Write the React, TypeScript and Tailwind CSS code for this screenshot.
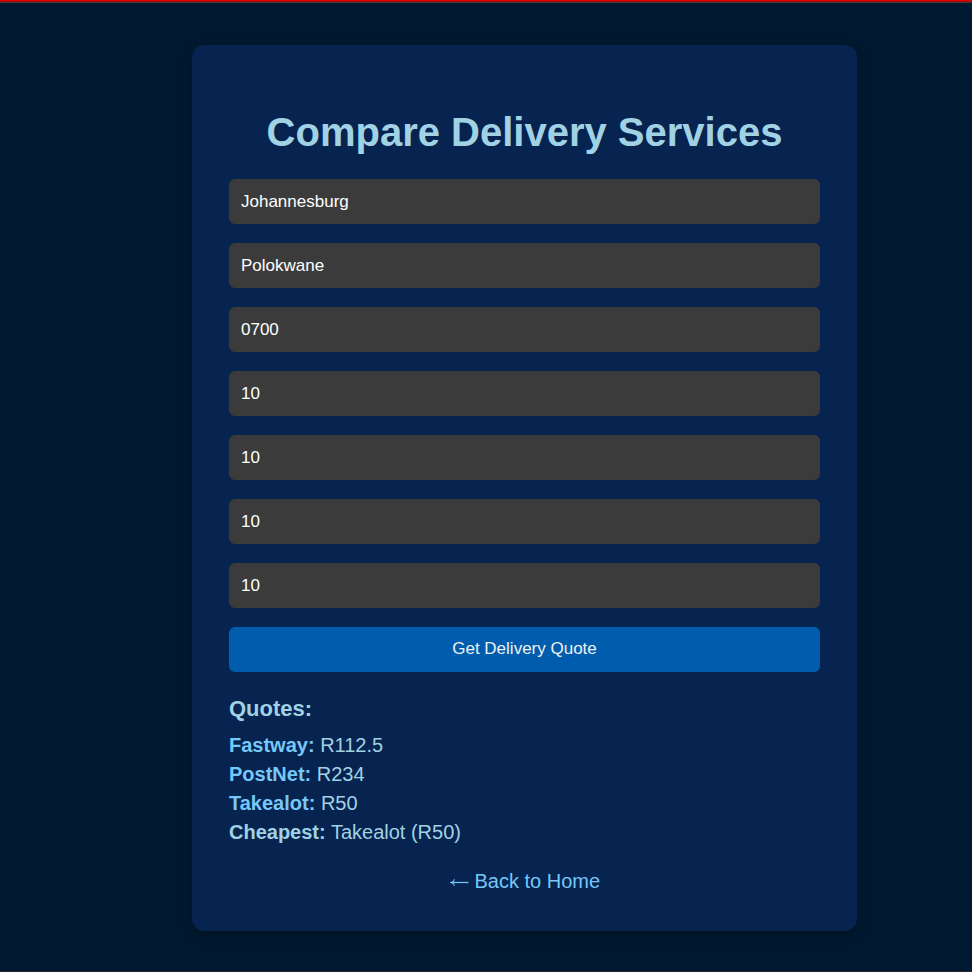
import { useState } from "react";

const fields = [
  { label: "Pickup city", value: "Johannesburg" },
  { label: "Delivery city", value: "Polokwane" },
  { label: "Postal code", value: "0700" },
  { label: "Weight", value: "10" },
  { label: "Length", value: "10" },
  { label: "Width", value: "10" },
  { label: "Height", value: "10" },
];

const quotes = [
  { service: "Fastway:", price: "R112.5" },
  { service: "PostNet:", price: "R234" },
  { service: "Takealot:", price: "R50" },
];

function BackArrow() {
  return (
    <svg aria-hidden="true" viewBox="0 0 20 10" className="inline-block h-[10px] w-5 align-baseline" fill="none" stroke="currentColor">
      <path d="M2 4.5H19.5" strokeWidth="1.2" />
      <path d="M5.5 1C5 2.7 3.5 4 1 4.5C3.5 5 5 6.3 5.5 8L4.4 4.5Z" fill="currentColor" strokeWidth="0.5" />
    </svg>
  );
}

export default function App() {
  const [values, setValues] = useState(fields.map((f) => f.value));
  return (
    <div className="min-h-screen border-b border-[#26292b] bg-[#001930] font-['Liberation_Sans',Arial,sans-serif] text-xl text-[#a0d2e4]">
      <div className="h-[3px] border-t border-b border-t-[#e00000] border-b-[#3b3b3b] bg-[#a80a0a]" />
      <div className="pt-[42px] pb-10 pl-[77px]">
        <main className="mx-auto w-full max-w-[665px] rounded-xl bg-[#072350] px-[37px] pt-16 pb-[35px] shadow-[0_4px_10px_rgba(0,0,0,0.3)]">
          <h1 className="mb-[23px] text-center text-[40px] leading-[47px] font-bold">Compare Delivery Services</h1>
          <form className="flex flex-col gap-[19px]" onSubmit={(e) => e.preventDefault()}>
            {fields.map((f, i) => (
              <input
                key={f.label}
                aria-label={f.label}
                value={values[i]}
                onChange={(e) => setValues(values.map((v, j) => (j === i ? e.target.value : v)))}
                className="h-[45px] w-full rounded-md bg-[#3b3b3b] px-3 text-[17px] text-white"
              />
            ))}
            <button type="submit" className="h-[45px] rounded-md bg-[#005dae] pb-0.5 text-[17px] text-[#f0f0f0]">
              Get Delivery Quote
            </button>
          </form>
          <section className="mt-[22px] leading-[29px]">
            <h2 className="mb-2 text-[22px] leading-[29px] font-bold">Quotes:</h2>
            {quotes.map((q) => (
              <p key={q.service}>
                <strong className="text-[#75c8f8]">{q.service}</strong> {q.price}
              </p>
            ))}
            <p>
              <strong>Cheapest:</strong> Takealot (R50)
            </p>
          </section>
          <p className="mt-5 text-center leading-[29px]">
            <a href="#" className="text-[#75c8f8]">
              <BackArrow /> Back to Home
            </a>
          </p>
        </main>
      </div>
    </div>
  );
}
